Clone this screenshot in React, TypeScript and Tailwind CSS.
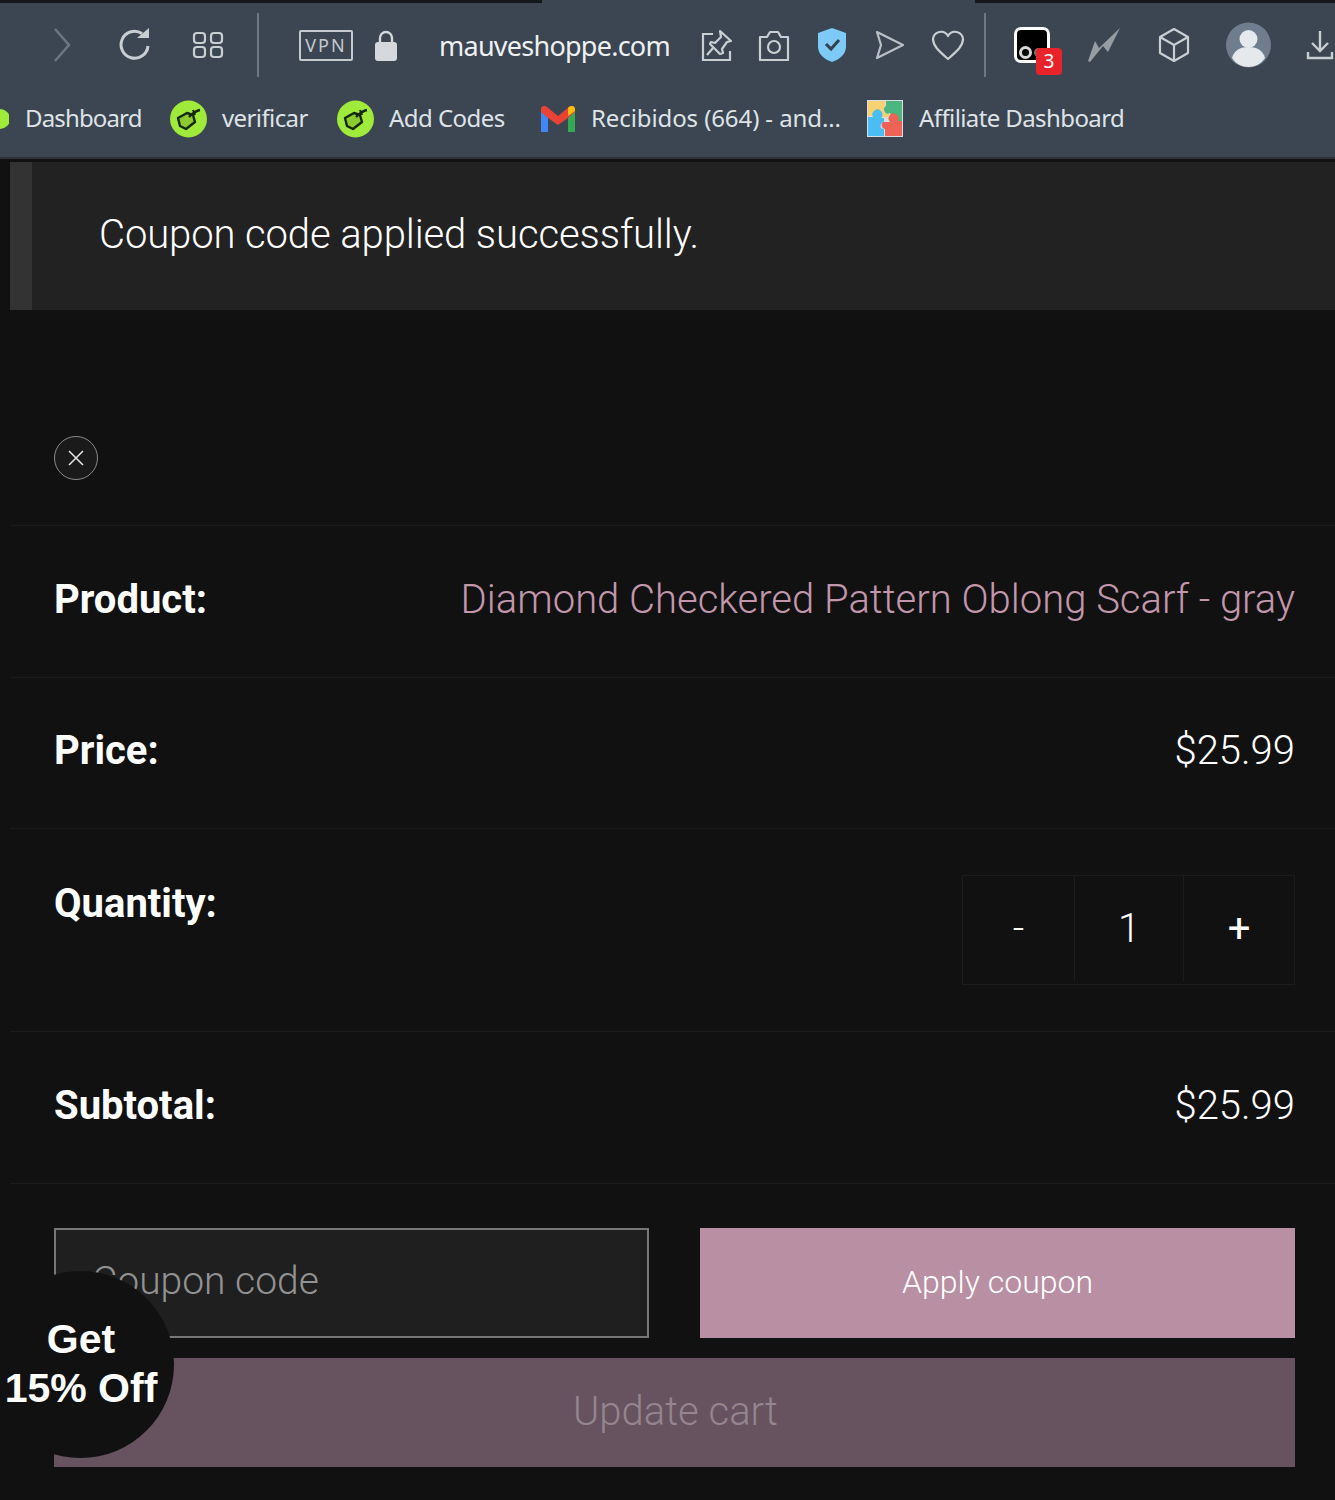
function GreenTag() {
  return (
    <svg width="37" height="38" viewBox="0 0 37 38" className="shrink-0">
      <circle cx="18.5" cy="19" r="18.500" fill="#a0ea3c" />
      <path d="M8 18l9-5 6 2 2 7-9 7-6-3z" fill="#8ccb30" stroke="#15280c" strokeWidth="2.4" strokeLinejoin="round" />
      <path d="M19 17c3-3 6-6 11-7" fill="none" stroke="#15280c" strokeWidth="2.4" />
      <path d="M23 10l2 5" fill="none" stroke="#15280c" strokeWidth="2" />
    </svg>
  );
}

function Gmail() {
  return (
    <svg width="34" height="26" viewBox="0 0 34 26" className="shrink-0">
      <path d="M0 5v21h7V10z" fill="#4285f4" />
      <path d="M27 10v16h7V5z" fill="#34a853" />
      <path d="M0 3c0-3 4-4 6-2l11 9 11-9c2-2 6-1 6 2v3l-7 6-10 7-10-7-7-6z" fill="#ea4335" />
      <path d="M27 10l7-5V3c0-3-4-4-6-2l-1 1z" fill="#fbbc04" />
    </svg>
  );
}

function Puzzle() {
  return (
    <svg width="36" height="37" viewBox="0 0 36 37" className="shrink-0">
      <rect width="36" height="37" fill="#d9dee3" />
      <path d="M1 1h17v5a4 4 0 0 0 1 7h3a3 3 0 0 1-4 4h-4a5 5 0 0 0-8-1H1z" fill="#f8d172" />
      <path d="M19 1h16v20h-5a4 4 0 0 0-7-3h-1a4 4 0 0 0 1-5 3 3 0 0 1-4-7z" fill="#4db67e" />
      <path d="M1 17h5a5 5 0 1 1 8 1h3v4a4 4 0 0 0-3 6 4 4 0 0 0 3 1v7H1z" fill="#4bbdf5" />
      <path d="M18 22h5a5 5 0 1 1 8-1h4v15H18v-7a4 4 0 0 1-2-7z" fill="#ee6355" />
    </svg>
  );
}

function Bookmark({ label, className }: { label: string; className: string }) {
  return (
    <span className={`shrink-0 whitespace-nowrap pb-[2px] font-['Noto_Sans',sans-serif] text-[24px] leading-none text-[#dfe3e7] ${className}`}>
      {label}
    </span>
  );
}

function Toolbar() {
  const stroke = '#c9ced3';
  return (
    <header className="h-[157px] overflow-hidden bg-[#3b4652] shadow-[0_2px_0_#2a313a]">
      <div className="flex h-[3px] justify-between">
        <div className="w-[542px] bg-[#14181d]" />
        <div className="w-[360px] bg-[#14181d]" />
      </div>
      <div className="flex h-[80px] items-center pt-[4px]">
        <svg width="24" height="36" viewBox="0 0 24 36" className="ml-[50px] shrink-0">
          <path d="M5 2l14 16L5 34" fill="none" stroke="#6d7781" strokeWidth="2.5" />
        </svg>
        <svg width="36" height="36" viewBox="0 0 36 36" className="ml-[43px] shrink-0">
          <path d="M31 19a13.500 13.500 0 1 1-6-12.500" fill="none" stroke={stroke} strokeWidth="3" />
          <path d="M20 11h12V1z" fill={stroke} />
        </svg>
        <svg width="32" height="28" viewBox="0 0 32 28" className="ml-[39px] shrink-0" fill="none" stroke={stroke} strokeWidth="2.2">
          <rect x="2" y="2" width="11" height="10" rx="3" />
          <rect x="19" y="2" width="11" height="10" rx="3" />
          <rect x="2" y="16" width="11" height="10" rx="3" />
          <rect x="19" y="16" width="11" height="10" rx="3" />
        </svg>
        <div className="ml-[33px] h-[64px] w-[2px] shrink-0 bg-[#6f7882]" />
        <div className="ml-[40px] flex h-[31px] w-[54px] shrink-0 items-center justify-center rounded-[2px] border-2 border-[#c4c9ce] font-['Noto_Sans',sans-serif] text-[18px] leading-none tracking-[2px] text-[#c4c9ce]">
          VPN
        </div>
        <svg width="24" height="32" viewBox="0 0 24 32" className="ml-[21px] shrink-0">
          <path d="M6 14V9a6 6 0 0 1 12 0v5" fill="none" stroke="#d5d8dc" strokeWidth="2.4" />
          <rect x="1" y="13" width="22" height="19" rx="3" fill="#d5d8dc" />
        </svg>
        <span className="ml-[41px] w-[231px] shrink-0 whitespace-nowrap font-['Noto_Sans',sans-serif] text-[27px] leading-none tracking-[-0.75px] text-[#eef0f2]">
          mauveshoppe.com
        </span>
        <svg width="32" height="32" viewBox="0 0 32 32" className="ml-[31px] shrink-0" fill="none" stroke={stroke} strokeWidth="2.2">
          <path d="M12 5H2v26h27v-9" />
          <path d="M19 2l11 10-4 1-5 7 1 4-3 1-10-10 1-2 4 1 6-6z" strokeLinejoin="round" />
          <path d="M12 19l-6 7" />
        </svg>
        <svg width="32" height="32" viewBox="0 0 32 32" className="ml-[25px] shrink-0" fill="none" stroke={stroke} strokeWidth="2.2">
          <path d="M2 8h7l3-5h8l3 5h7v23H2z" strokeLinejoin="round" />
          <circle cx="16" cy="18" r="6" />
        </svg>
        <svg width="28" height="34" viewBox="0 0 28 34" className="ml-[28px] shrink-0">
          <path d="M14 0l14 5v14c0 8-8 13-14 15C8 32 0 27 0 19V5z" fill="#7ccaf5" />
          <path d="M8 16l5 5 8-9" fill="none" stroke="#36404b" strokeWidth="3" />
        </svg>
        <svg width="32" height="32" viewBox="0 0 32 32" className="ml-[28px] shrink-0" fill="none" stroke="#b9bfc5" strokeWidth="2.2">
          <path d="M3 3l26 13L3 29l4-13z" strokeLinejoin="round" />
        </svg>
        <svg width="34" height="32" viewBox="0 0 34 32" className="ml-[25px] shrink-0" fill="none" stroke={stroke} strokeWidth="2.2">
          <path d="M17 30C8 22 2 17 2 10a8 8 0 0 1 15-3 8 8 0 0 1 15 3c0 7-6 12-15 20z" strokeLinejoin="round" />
        </svg>
        <div className="ml-[19px] h-[64px] w-[2px] shrink-0 bg-[#6f7882]" />
        <div className="relative ml-[28px] h-[36px] w-[36px] shrink-0 rounded-[7px] border-[3px] border-white bg-black">
          <span className="absolute bottom-[1px] left-[2px] h-[13px] w-[13px] rounded-full border-[3px] border-[#d8d8d8]" />
          <span className="absolute bottom-[3px] left-[17px] h-[9px] w-[9px] rounded-full border-2 border-[#777777]" />
          <span className="absolute bottom-[-15px] right-[-15px] flex h-[27px] w-[26px] items-center justify-center rounded-[4px] bg-[#e8232a] font-['Noto_Sans',sans-serif] text-[19px] leading-none text-white">
            3
          </span>
        </div>
        <svg width="32" height="34" viewBox="0 0 32 34" className="ml-[38px] shrink-0">
          <path d="M0 33l7-20 4 7L32 0 20 24l-5-6L2 34z" fill="#979da3" />
        </svg>
        <svg width="32" height="36" viewBox="0 0 32 36" className="ml-[38px] shrink-0" fill="none" stroke={stroke} strokeWidth="2.2">
          <path d="M16 2l14 8v16l-14 8-14-8V10z" strokeLinejoin="round" />
          <path d="M2 10l14 8 14-8M16 18v16" />
        </svg>
        <svg width="45" height="46" viewBox="0 0 45 46" className="ml-[36px] shrink-0">
          <circle cx="22.500" cy="23" r="22.500" fill="#6f7e8e" />
          <circle cx="22.500" cy="17" r="9" fill="#e6e9ec" />
          <path d="M6 36c2-8 9-11 16.500-11S37 28 39 36c-4 6-10 9-16.500 9S10 42 6 36z" fill="#e6e9ec" />
        </svg>
        <svg width="28" height="30" viewBox="0 0 28 30" className="ml-[35px] shrink-0" fill="none" stroke={stroke} strokeWidth="2.4">
          <path d="M14 1v19M6 13l8 8 8-8M2 22v6h24v-6" />
        </svg>
      </div>
      <div className="flex h-[71px] items-center">
        <svg width="9" height="38" viewBox="0 0 9 38" className="shrink-0">
          <circle cx="0" cy="19" r="10" fill="#a0ea3c" />
        </svg>
        <Bookmark label="Dashboard" className="ml-[16px] w-[117px] tracking-[-0.85px]" />
        <span className="ml-[28px] shrink-0"><GreenTag /></span>
        <Bookmark label="verificar" className="ml-[15px] w-[86px] tracking-[-0.6px]" />
        <span className="ml-[29px] shrink-0"><GreenTag /></span>
        <Bookmark label="Add Codes" className="ml-[15px] w-[116px] tracking-[-0.55px]" />
        <span className="ml-[36px] shrink-0"><Gmail /></span>
        <Bookmark label="Recibidos (664) - and..." className="ml-[16px] w-[249px] tracking-[-0.1px]" />
        <span className="ml-[27px] shrink-0"><Puzzle /></span>
        <Bookmark label="Affiliate Dashboard" className="ml-[16px] w-[206px] tracking-[-0.6px]" />
      </div>
    </header>
  );
}

function Row({ label, children, className }: { label: string; children: React.ReactNode; className: string }) {
  return (
    <div className={`flex justify-between border-t border-[#1b1b1c] pl-[44px] pr-[40px] ${className}`}>
      <span className="text-[40px] font-bold leading-[46px] text-white">{label}</span>
      {children}
    </div>
  );
}

export default function App() {
  return (
    <div className="relative h-[1500px] w-[1335px] overflow-hidden bg-[#111112] font-['Roboto',sans-serif] text-white">
      <Toolbar />
      <main className="pl-[10px]">
        <div className="mt-[5px] flex h-[148px] items-center border-l-[22px] border-[#333333] bg-[#222222] pb-[3px] pl-[67px] text-[40px] font-light leading-none tracking-[-0.1px] text-white">
          Coupon code applied successfully.
        </div>
        <div className="flex h-[215px] items-end pb-[45px] pl-[44px]">
          <div className="flex h-[44px] w-[44px] items-center justify-center rounded-full border border-[#8a8a8a] bg-[#1a1a1b]">
            <svg width="16" height="16" viewBox="0 0 16 16" fill="none" stroke="#e6e6e6" strokeWidth="1.5">
              <path d="M1 1l14 14M15 1L1 15" />
            </svg>
          </div>
        </div>
        <Row label="Product:" className="h-[152px] items-center pb-[4px]">
          <span className="text-[40px] font-light leading-[46px] text-[#c297ac]">
            Diamond Checkered Pattern Oblong Scarf - gray
          </span>
        </Row>
        <Row label="Price:" className="h-[151px] items-center pb-[4px]">
          <span className="text-[40px] font-light leading-[46px] text-white">$25.99</span>
        </Row>
        <Row label="Quantity:" className="h-[203px] items-start pt-[52px]">
          <div className="-mt-[6px] flex h-[110px] w-[333px] border border-[#1c1c1d] pb-[2px] text-[40px] font-light text-white">
            <div className="flex w-[111px] items-center justify-center">-</div>
            <div className="flex w-[110px] items-center justify-center border-x border-[#1c1c1d]">1</div>
            <div className="flex w-[110px] items-center justify-center font-normal">+</div>
          </div>
        </Row>
        <Row label="Subtotal:" className="h-[152px] items-center pb-[4px]">
          <span className="text-[40px] font-light leading-[46px] text-white">$25.99</span>
        </Row>
        <div className="border-t border-[#1b1b1c] pl-[44px] pr-[40px] pt-[44px]">
          <div className="flex justify-between">
            <div className="flex h-[110px] w-[595px] items-center border-2 border-[#77777a] bg-[#1f1f20] pb-[3px] pl-[36px] text-[39px] font-light text-[#929292]">
              Coupon code
            </div>
            <div className="flex h-[110px] w-[595px] items-center justify-center bg-[#b88fa3] pb-[2px] text-[32px] font-light text-white">
              Apply coupon
            </div>
          </div>
          <div className="mt-[20px] flex h-[109px] items-center justify-center bg-[#67525f] pb-[2px] pl-[2px] text-[40px] font-light text-[#94858e]">
            Update cart
          </div>
        </div>
      </main>
      <div className="absolute left-[-13px] top-[1271px] flex h-[187px] w-[187px] flex-col items-center justify-center rounded-full bg-[#111112] pb-[2px] pl-[1px] text-center font-['Liberation_Sans',sans-serif] text-[41px] font-bold leading-[49px] text-white">
        <span>Get</span>
        <span className="whitespace-nowrap">15% Off</span>
      </div>
    </div>
  );
}
